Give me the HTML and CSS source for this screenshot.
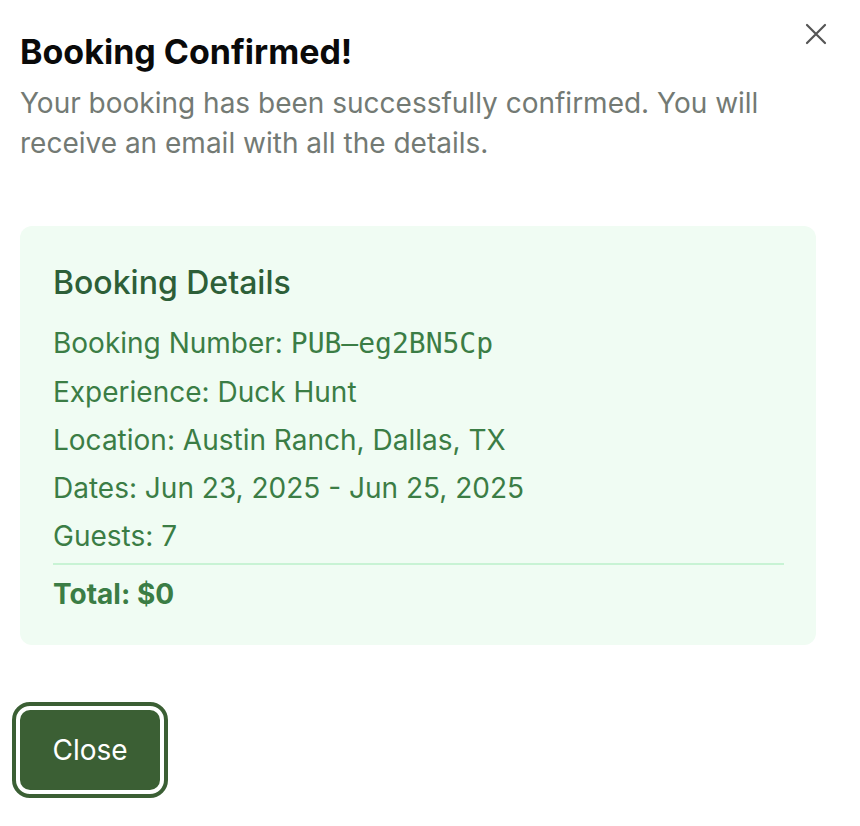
FILE: index.html
```html
<!DOCTYPE html>
<html>
<head>
<meta charset="utf-8">
<link rel="stylesheet" href="styles.css">
</head>
<body>
<div class="dialog">
  <button class="close-x" aria-label="Close">
    <svg width="24" height="24" viewBox="0 0 24 24" fill="none" stroke="currentColor" stroke-width="2.2" stroke-linecap="round"><path d="M3 3L21 21M21 3L3 21"/></svg>
  </button>
  <header class="head">
    <h1 class="title">Booking Confirmed!</h1>
    <p class="desc">Your booking has been successfully confirmed. You will receive an email with all the details.</p>
  </header>
  <section class="card">
    <h2 class="card-title">Booking Details</h2>
    <div class="rows">
      <p class="row">Booking Number: <span class="mono">PUB–eg2BN5Cp</span></p>
      <p class="row">Experience: Duck Hunt</p>
      <p class="row">Location: Austin Ranch, Dallas, TX</p>
      <p class="row">Dates: Jun 23, 2025 - Jun 25, 2025</p>
      <p class="row">Guests: 7</p>
    </div>
    <div class="divider"></div>
    <p class="total">Total: $0</p>
  </section>
  <div class="actions">
    <button class="btn">Close</button>
  </div>
</div>
</body>
</html>
```
FILE: styles.css
```css
* { box-sizing: border-box; }
html, body { margin: 0; padding: 0; background: #ffffff; }
body { font-family: Inter, "Noto Sans", sans-serif; }
.dialog {
  position: relative;
  width: 860px;
  padding: 30px 44px 0 20px;
}
.close-x {
  position: absolute;
  top: 22px;
  right: 32px;
  background: none;
  border: 0;
  padding: 0;
  color: #555;
  display: flex;
}
.head { display: flex; flex-direction: column; }
.title {
  margin: 0 0 9px;
  font-size: 34px;
  line-height: 44px;
  font-weight: 700;
  color: #0a0a0a;
}
.desc {
  margin: 0;
  font-size: 28px;
  line-height: 40px;
  color: #737a74;
}
.card {
  margin-top: 63px;
  background: #f0fcf3;
  border-radius: 12px;
  padding: 32px 32px 31px 33px;
}
.card-title {
  margin: 0 0 11px;
  font-size: 32px;
  line-height: 50px;
  font-weight: 500;
  color: #2d5f38;
}
.rows { display: flex; flex-direction: column; }
.row {
  margin: 0;
  font-size: 28px;
  line-height: 48px;
  color: #3b7d45;
}
.mono { font-family: "DejaVu Sans Mono", monospace; font-size: 28px; }
.divider {
  height: 2px;
  background: #c8f3d4;
  margin: 3px 0 9px;
}
.total {
  margin: 0;
  font-size: 28px;
  line-height: 40px;
  font-weight: 700;
  color: #3b7d45;
}
.actions { margin-top: 65px; padding-bottom: 30px; }
.btn {
  font-family: Inter, sans-serif;
  font-size: 28px;
  color: #ffffff;
  background: #3b5f34;
  border: 0;
  border-radius: 10px;
  width: 140px;
  height: 80px;
  outline: 4px solid #3b5f34;
  outline-offset: 4px;
}
```
